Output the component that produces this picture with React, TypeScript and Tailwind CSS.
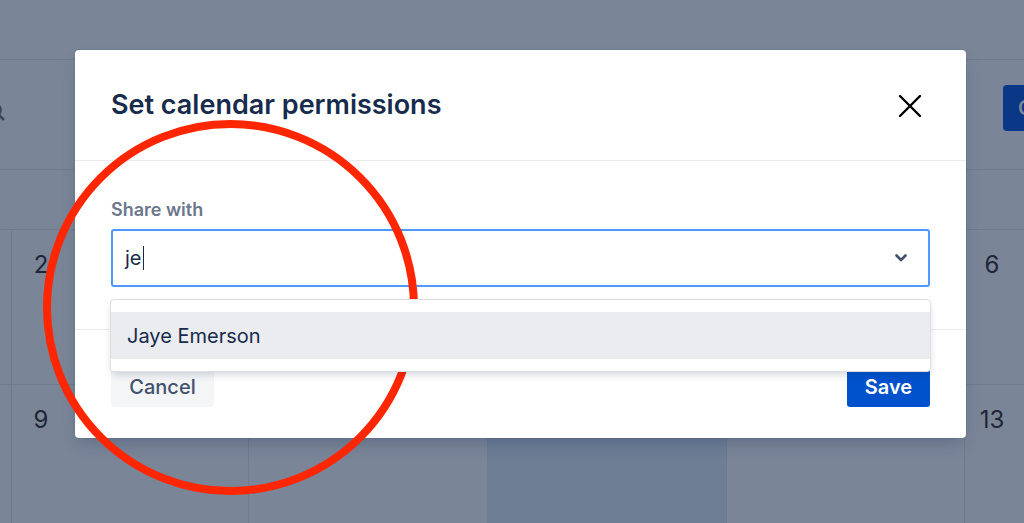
import React from "react";

function Chevron() {
  return (
    <svg width="14" height="10" viewBox="0 0 14 10" fill="none">
      <path d="M2.5 2.5 L7 7 L11.5 2.5" stroke="#42526e" strokeWidth="2.6" strokeLinecap="round" strokeLinejoin="round" />
    </svg>
  );
}

function CloseIcon() {
  return (
    <svg width="24" height="24" viewBox="0 0 24 24" fill="none">
      <path d="M2 2 L22 22 M22 2 L2 22" stroke="#000" strokeWidth="2.4" strokeLinecap="round" />
    </svg>
  );
}

export default function App() {
  const font = { fontFamily: "Inter, 'Liberation Sans', sans-serif" };
  return (
    <div className="relative w-[1024px] h-[523px] overflow-hidden bg-[#7a8598]" style={font}>
      {/* background calendar page, dimmed */}
      <div className="flex flex-col w-full h-full">
        <div className="h-[60px] shrink-0 border-b border-[#6f7a8d]" />
        <div className="h-[110px] shrink-0 border-b border-[#6f7a8d] flex items-center justify-between">
          <svg className="ml-[-15px] mt-[-6px]" width="22" height="22" viewBox="0 0 24 24" fill="none">
            <circle cx="10" cy="10" r="7" stroke="#3c4456" strokeWidth="2.6" />
            <path d="M15 15 L20 20" stroke="#3c4456" strokeWidth="2.6" strokeLinecap="round" />
          </svg>
          <div className="h-[46px] w-[21px] mr-[0px] mt-[-14px] rounded-l-[4px] bg-[#0a3886] flex items-center pl-[15px] overflow-hidden text-[20px] font-semibold text-[#7c879a]">
            C
          </div>
        </div>
        <div className="h-[60px] shrink-0 border-b border-[#6f7a8d]" />
        <div className="grid grid-cols-[12px_237px_239px_239px_238px_1fr] grid-rows-[155px_155px] text-[24px] text-[#1f2637]">
          <div className="border-r border-[#6f7a8d] border-b" />
          <div className="border-r border-b border-[#6f7a8d]"><div className="w-[58px] text-center pt-[17px]">2</div></div>
          <div className="border-r border-b border-[#6f7a8d]" />
          <div className="border-r border-b border-[#6f7a8d]" />
          <div className="border-r border-b border-[#6f7a8d]" />
          <div className="border-b border-[#6f7a8d]"><div className="w-[54px] text-center pt-[17px]">6</div></div>
          <div className="border-r border-[#6f7a8d]" />
          <div className="border-r border-[#6f7a8d]"><div className="w-[58px] text-center pt-[17px]">9</div></div>
          <div className="border-r border-[#6f7a8d]" />
          <div className="border-r border-[#6f7a8d] bg-[#6d7e95]" />
          <div className="border-r border-[#6f7a8d]" />
          <div><div className="w-[54px] text-center pt-[17px]">13</div></div>
        </div>
      </div>

      {/* modal */}
      <div className="absolute left-[75px] top-[50px] w-[891px] h-[388px] bg-white rounded-[4px] shadow-[0_8px_16px_-4px_rgba(9,30,66,0.25),0_0_1px_rgba(9,30,66,0.31)] flex flex-col">
        <div className="h-[111px] shrink-0 border-b border-[#ebecf0] px-[36px] flex items-center justify-between">
          <h1 className="text-[27px] font-semibold text-[#172b4d]">Set calendar permissions</h1>
          <div className="mr-[8px] mt-[1px] w-[24px] h-[24px] flex items-center justify-center">
            <CloseIcon />
          </div>
        </div>
        <div className="px-[36px] pt-[37px] pb-[42px] border-b border-[#ebecf0]">
          <div className="text-[18px] leading-[24px] font-semibold text-[#6b778c]">Share with</div>
          <div className="relative mt-[7px]">
            <div className="h-[58px] border-2 border-[#4c9aff] rounded-[3px] flex items-center pl-[12px] pr-[20px]">
              <div className="flex-1 flex items-center text-[20px] text-[#172b4d]">
                je<span className="inline-block w-[1px] h-[24px] bg-[#172b4d] ml-[1px]" />
              </div>
              <Chevron />
            </div>
            <div className="absolute z-10 left-[-1px] right-[-1px] top-[70px] h-[73px] bg-white border border-[#dcdfe4] rounded-[4px] shadow-[0_4px_8px_-2px_rgba(9,30,66,0.2)] py-[12px]">
              <div className="h-[47px] bg-[#ebecf0] flex items-center pl-[16px] text-[20px] text-[#172b4d]">
                Jaye Emerson
              </div>
            </div>
          </div>
        </div>
        <div className="px-[36px] pt-[37px] flex justify-between">
          <button className="h-[40px] w-[103px] rounded-[3px] bg-[#f4f5f7] text-[20px] font-medium text-[#42526e]">Cancel</button>
          <button className="h-[40px] w-[83px] rounded-[3px] bg-[#0052cc] text-[20px] font-semibold text-white">Save</button>
        </div>
      </div>

      {/* red annotation circle */}
      <svg className="absolute left-0 top-0 pointer-events-none" width="1024" height="523" viewBox="0 0 1024 523">
        <circle cx="230.5" cy="307.5" r="183.5" fill="none" stroke="#ff2600" strokeWidth="8" />
      </svg>
    </div>
  );
}
